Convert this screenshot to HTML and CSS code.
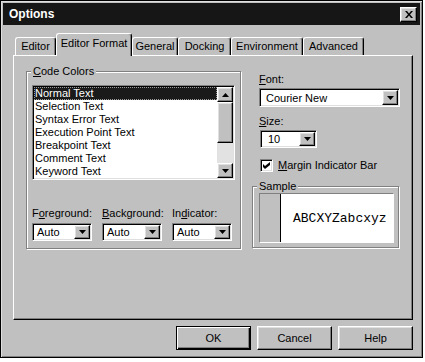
FILE: index.html
```html
<!DOCTYPE html>
<html lang="en">
<head>
    <meta charset="UTF-8">
    <title>Options</title>
    <link rel="stylesheet" href="styles.css">
</head>
<body>
    <div class="window">
        <div class="titlebar">
            <span class="title">Options</span>
            <button class="close raised" aria-label="Close">
                <svg width="8" height="7" viewBox="0 0 8 7"><path d="M0 0h2l2 2.5L6 0h2L5 3.5 8 7H6L4 4.5 2 7H0l3-3.5z" fill="#000"/></svg>
            </button>
        </div>

        <div class="content">
            <div class="tabs">
                <div class="tab tab-editor">Editor</div>
                <div class="tab tab-format active">Editor Format</div>
                <div class="tab tab-general">General</div>
                <div class="tab tab-docking">Docking</div>
                <div class="tab tab-env">Environment</div>
                <div class="tab tab-advanced">Advanced</div>
            </div>

            <div class="panel">
                <!-- left: code colour list and pickers -->
                <div class="group colors">
                    <span class="legend"><u>C</u>ode Colors</span>
                    <div class="listbox sunken">
                        <ul class="items">
                            <li class="selected">Normal Text</li>
                            <li>Selection Text</li>
                            <li>Syntax Error Text</li>
                            <li>Execution Point Text</li>
                            <li>Breakpoint Text</li>
                            <li>Comment Text</li>
                            <li>Keyword Text</li>
                        </ul>
                        <div class="scrollbar">
                            <div class="sb-btn raised">
                                <svg width="7" height="4" viewBox="0 0 7 4"><path d="M3.5 0L7 4H0z" fill="#000"/></svg>
                            </div>
                            <div class="sb-thumb raised"></div>
                            <div class="sb-track"></div>
                            <div class="sb-btn raised">
                                <svg width="7" height="4" viewBox="0 0 7 4"><path d="M0 0h7L3.5 4z" fill="#000"/></svg>
                            </div>
                        </div>
                    </div>

                    <div class="pickers">
                        <div class="picker">
                            <label>F<u>o</u>reground:</label>
                            <div class="combo sunken">
                                <span class="combo-value">Auto</span>
                                <span class="drop raised"><svg width="7" height="4" viewBox="0 0 7 4"><path d="M0 0h7L3.5 4z" fill="#000"/></svg></span>
                            </div>
                        </div>
                        <div class="picker">
                            <label><u>B</u>ackground:</label>
                            <div class="combo sunken">
                                <span class="combo-value">Auto</span>
                                <span class="drop raised"><svg width="7" height="4" viewBox="0 0 7 4"><path d="M0 0h7L3.5 4z" fill="#000"/></svg></span>
                            </div>
                        </div>
                        <div class="picker">
                            <label>In<u>d</u>icator:</label>
                            <div class="combo sunken">
                                <span class="combo-value">Auto</span>
                                <span class="drop raised"><svg width="7" height="4" viewBox="0 0 7 4"><path d="M0 0h7L3.5 4z" fill="#000"/></svg></span>
                            </div>
                        </div>
                    </div>
                </div>

                <!-- right: font, size, sample -->
                <div class="side">
                    <label class="field-label"><u>F</u>ont:</label>
                    <div class="combo combo-font sunken">
                        <span class="combo-value">Courier New</span>
                        <span class="drop raised"><svg width="7" height="4" viewBox="0 0 7 4"><path d="M0 0h7L3.5 4z" fill="#000"/></svg></span>
                    </div>

                    <label class="field-label size-label"><u>S</u>ize:</label>
                    <div class="combo combo-size sunken">
                        <span class="combo-value">10</span>
                        <span class="drop raised"><svg width="7" height="4" viewBox="0 0 7 4"><path d="M0 0h7L3.5 4z" fill="#000"/></svg></span>
                    </div>

                    <div class="checkrow">
                        <span class="check sunken">
                            <svg width="7" height="7" viewBox="0 0 7 7"><path d="M0 2l2 2 5-4v3L2 7 0 5z" fill="#000"/></svg>
                        </span>
                        <span><u>M</u>argin Indicator Bar</span>
                    </div>

                    <div class="group sample">
                        <span class="legend">Sample</span>
                        <div class="sample-box">
                            <div class="gutter"></div>
                            <div class="preview">ABCXYZabcxyz</div>
                        </div>
                    </div>
                </div>
            </div>

            <div class="buttons">
                <button class="btn default">OK</button>
                <button class="btn raised">Cancel</button>
                <button class="btn raised">Help</button>
            </div>
        </div>
    </div>
</body>
</html>
```

FILE: styles.css
```css
body {
    margin: 0;
    background: #fff;
    font-family: "Liberation Sans", Arial, sans-serif;
    font-size: 11px;
    color: #000;
}
u {
    text-underline-offset: 1px;
}
.window {
    width: 423px;
    height: 358px;
    box-sizing: border-box;
    border: 1px solid #000;
    padding: 2px;
    background: #c0c0c0;
    box-shadow: inset 1px 1px 0 #dfdfdf, inset -1px -1px 0 #808080;
}
.raised {
    box-sizing: border-box;
    background: #c0c0c0;
    border: 1px solid;
    border-color: #fff #000 #000 #fff;
    box-shadow: inset -1px -1px 0 #808080, inset 1px 1px 0 #dfdfdf;
}
.sunken {
    box-sizing: border-box;
    background: #fff;
    border: 1px solid;
    border-color: #808080 #fff #fff #808080;
    box-shadow: inset 1px 1px 0 #000, inset -1px -1px 0 #dfdfdf;
    padding: 1px;
}

/* title bar */
.titlebar {
    height: 22px;
    background: #161616;
    color: #fff;
    display: flex;
    align-items: center;
    justify-content: space-between;
    padding: 0 3px 0 6px;
}
.title {
    font-weight: bold;
    font-size: 12px;
}
.close {
    width: 17px;
    height: 15px;
    padding: 0;
    display: flex;
    align-items: center;
    justify-content: center;
}

.content {
    padding: 8px 10px 0;
}

/* tabs */
.tabs {
    display: flex;
    align-items: flex-end;
    height: 22px;
    padding-left: 2px;
    position: relative;
    z-index: 1;
}
.tab {
    box-sizing: border-box;
    height: 18px;
    border: 1px solid;
    border-bottom: 0;
    border-color: #fff #000 #000 #fff;
    border-radius: 3px 3px 0 0;
    box-shadow: inset -1px 0 0 #808080;
    text-align: center;
    line-height: 16px;
    white-space: nowrap;
}
.tab.active {
    height: 23px;
    margin-bottom: -1px;
    background: #c0c0c0;
    line-height: 18px;
}
.tab-editor { width: 41px; }
.tab-format { width: 76px; }
.tab-general { width: 46px; }
.tab-docking { width: 53px; }
.tab-env { width: 72px; }
.tab-advanced { width: 61px; }

/* page panel */
.panel {
    box-sizing: border-box;
    width: 400px;
    height: 265px;
    border: 1px solid;
    border-color: #fff #000 #000 #fff;
    box-shadow: inset -1px -1px 0 #808080;
    padding: 15px 0 0 12px;
    display: flex;
    gap: 11px;
}
.group {
    position: relative;
    box-sizing: border-box;
    border: 1px solid #808080;
    box-shadow: 1px 1px 0 #fff, inset 1px 1px 0 #fff;
}
.legend {
    position: absolute;
    top: -7px;
    left: 4px;
    padding: 0 2px;
    background: #c0c0c0;
    line-height: 13px;
}
.colors {
    width: 215px;
    height: 178px;
    padding: 13px 0 0 5px;
}

/* list */
.listbox {
    display: flex;
    width: 203px;
    height: 95px;
}
.items {
    flex: 1;
    list-style: none;
    margin: 0;
    padding: 0;
}
.items li {
    height: 13px;
    line-height: 13px;
    padding-left: 1px;
    white-space: nowrap;
}
.items li.selected {
    background: #1a1a1a;
    color: #fff;
    outline: 1px dotted #9a9a9a;
    outline-offset: -1px;
}
.scrollbar {
    width: 16px;
    display: flex;
    flex-direction: column;
}
.sb-btn {
    height: 15px;
    display: flex;
    align-items: center;
    justify-content: center;
}
.sb-thumb {
    height: 41px;
}
.sb-track {
    flex: 1;
    background: #e2e2e2;
}

/* combos */
.pickers {
    display: flex;
    gap: 10px;
    margin-top: 27px;
}
.picker {
    width: 60px;
}
.picker label {
    display: block;
    line-height: 13px;
    margin-bottom: 3px;
    white-space: nowrap;
}
.combo {
    display: flex;
    align-items: center;
    height: 18px;
}
.combo-value {
    flex: 1;
    padding-left: 3px;
}
.drop {
    width: 16px;
    height: 100%;
    display: flex;
    align-items: center;
    justify-content: center;
}

/* right column */
.side {
    width: 148px;
    display: flex;
    flex-direction: column;
    align-items: flex-start;
    padding-top: 2px;
}
.field-label {
    line-height: 13px;
    margin-left: 7px;
}
.combo-font {
    width: 141px;
    height: 19px;
    margin: 2px 0 0 7px;
}
.combo-font .combo-value {
    padding-left: 5px;
}
.size-label {
    margin-top: 8px;
}
.combo-size {
    width: 57px;
    margin: 2px 0 0 8px;
}
.combo-size .combo-value {
    padding-left: 6px;
}
.checkrow {
    display: flex;
    align-items: center;
    gap: 5px;
    margin: 11px 0 0 8px;
    line-height: 13px;
}
.check {
    width: 13px;
    height: 13px;
    display: flex;
    align-items: center;
    justify-content: center;
}
.sample {
    width: 147px;
    height: 62px;
    margin-top: 14px;
    padding: 6px 0 0 6px;
}
.sample-box {
    box-sizing: border-box;
    width: 135px;
    height: 50px;
    display: flex;
    border: 1px solid;
    border-color: #808080 #fff #fff #808080;
}
.gutter {
    width: 20px;
    border-right: 1px solid #000;
    background: #c0c0c0;
}
.preview {
    flex: 1;
    background: #fff;
    display: flex;
    align-items: center;
    padding-left: 12px;
    font-family: "Liberation Mono", "Courier New", monospace;
    font-size: 13px;
}

/* dialog buttons */
.buttons {
    width: 400px;
    display: flex;
    justify-content: flex-end;
    gap: 6px;
    margin-top: 6px;
}
.btn {
    width: 75px;
    height: 24px;
    padding: 0;
    font-family: inherit;
    font-size: 11px;
    color: #000;
}
.btn.default {
    box-sizing: border-box;
    background: #c0c0c0;
    border: 1px solid #000;
    box-shadow: inset 1px 1px 0 #fff, inset -1px -1px 0 #000, inset -2px -2px 0 #808080;
}
```
